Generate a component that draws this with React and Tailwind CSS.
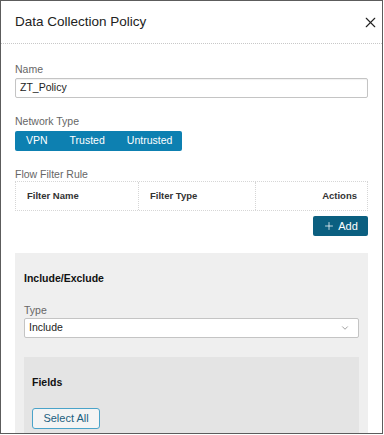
import { X, Plus, ChevronDown } from 'lucide-react';

const font = { fontFamily: '"Liberation Sans", Arial, sans-serif' };

const App = () => {
  return (
    <div className="w-[384px] h-[435px] bg-white" style={font}>
      <div className="w-[383px] h-[434px] border border-[#5c5c5c] overflow-hidden flex flex-col">
        <div className="h-[42px] flex items-center justify-between pl-[14px] pr-[3px] shrink-0">
          <h1 className="text-[13.5px] text-[#222] pt-[1px]">Data Collection Policy</h1>
          <X className="w-[17px] h-[17px] text-[#222]" strokeWidth={1.6} />
        </div>
        <div className="border-t border-dotted border-[#c8c8c8] shrink-0" />

        <div className="px-[14px] pt-[19px] flex-1">
          <label className="block text-[10.5px] text-[#666] leading-[13px]">Name</label>
          <div className="mt-[2px] h-[20px] border border-[#c4c4c4] rounded-[2px] flex items-center px-[4px] text-[10.5px] text-[#222] shadow-[inset_0_1px_1px_rgba(0,0,0,0.06)]">
            ZT_Policy
          </div>

          <label className="block mt-[17px] text-[10.5px] text-[#666] leading-[12px]">Network Type</label>
          <div className="mt-[1px] inline-flex h-[20px] w-[167px] rounded-[2px] bg-[#0d80b1] text-white text-[10.5px] items-center">
            <span className="pl-[11px] pr-[22px]">VPN</span>
            <span className="pr-[22px]">Trusted</span>
            <span>Untrusted</span>
          </div>

          <label className="block mt-[17px] text-[10.5px] text-[#666] leading-[12px]">Flow Filter Rule</label>
          <div className="mt-[1px] h-[30px] border border-dotted border-[#d6d6d6] grid grid-cols-[123px_117px_1fr] text-[9.5px] font-bold text-[#333]">
            <div className="flex items-center pl-[11px] border-r border-dotted border-[#d6d6d6]">Filter Name</div>
            <div className="flex items-center pl-[11px] border-r border-dotted border-[#d6d6d6]">Filter Type</div>
            <div className="flex items-center justify-end pr-[10px]">Actions</div>
          </div>
          <div className="flex justify-end mt-[5px]">
            <button className="w-[55px] h-[20px] bg-[#0b5f80] text-white text-[11px] rounded-[2px] flex items-center justify-center gap-[3px]">
              <Plus className="w-[12px] h-[12px]" strokeWidth={1.5} />
              Add
            </button>
          </div>

          <div className="mt-[17px] bg-[#efefef] px-[9px] pt-[18px] h-[200px]">
            <div className="text-[10.5px] font-bold text-[#111]">Include/Exclude</div>
            <label className="block mt-[17px] text-[10.5px] text-[#666] leading-[13px]">Type</label>
            <div className="mt-[1px] h-[20px] border border-[#c4c4c4] bg-white rounded-[2px] flex items-center justify-between pl-[4px] pr-[8px] text-[10.5px] text-[#222]">
              <span>Include</span>
              <ChevronDown className="w-[10px] h-[10px] text-[#666]" strokeWidth={1.5} />
            </div>
            <div className="mt-[19px] bg-[#e4e4e4] px-[8px] pt-[18px] h-[100px]">
              <div className="text-[10.5px] font-bold text-[#111]">Fields</div>
              <button className="mt-[17px] w-[68px] h-[21px] rounded-[3px] border-[1.5px] border-[#4aa3c9] bg-[#f4f4f4] text-[11px] text-[#1c5f7f]">
                Select All
              </button>
            </div>
          </div>
        </div>
      </div>
    </div>
  );
};

export default App;
